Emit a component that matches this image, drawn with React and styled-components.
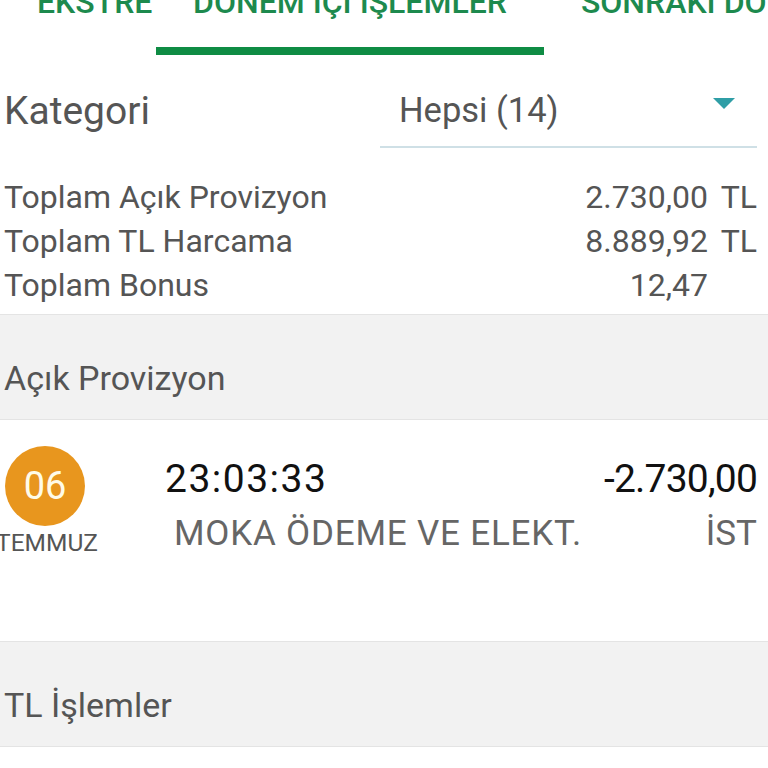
import React from 'react'
import styled, { createGlobalStyle } from 'styled-components'

const GlobalStyle = createGlobalStyle`
  html, body {
    margin: 0;
    padding: 0;
    background: #fff;
    overflow: hidden;
  }
  body {
    font-family: Roboto, "Noto Sans", sans-serif;
  }
`

// sekme şeridi
const Tabs = styled.div`
  display: flex;
  margin-top: -13px;
  white-space: nowrap;
`

const Tab = styled.div`
  flex: 0 0 auto;
  box-sizing: border-box;
  height: 68px;
  padding: 0 37px;
  width: ${p => p.$width ? p.$width + 'px' : 'auto'};
  text-align: ${p => p.$align || 'center'};
  font-size: 32px;
  line-height: 30px;
  font-weight: 500;
  color: #1d8a4e;
  border-bottom: 8px solid ${p => p.$active ? '#0f8c44' : 'transparent'};
`

const Page = styled.div`
  width: 768px;
`

const FilterRow = styled.div`
  display: flex;
  align-items: center;
  height: 112px;
  padding-left: 4px;
`

const Label = styled.div`
  width: 376px;
  font-size: 39px;
  color: #555;
`

const Select = styled.div`
  flex: 0 0 377px;
  display: flex;
  align-items: center;
  justify-content: space-between;
  box-sizing: border-box;
  height: 74px;
  padding: 0 22px 0 19px;
  border-bottom: 2px solid #cfe0e6;
  font-size: 34.5px;
  color: #555;
`

const Caret = styled.span`
  width: 0;
  height: 0;
  border-left: 11px solid transparent;
  border-right: 11px solid transparent;
  border-top: 11px solid #2f9ea6;
  margin-top: -14px;
`

const Summary = styled.div`
  padding: 8px 0 7px 4px;
`

const SumRow = styled.div`
  display: grid;
  grid-template-columns: 1fr 300px 60px;
  align-items: center;
  height: 44px;
  font-size: 32px;
  color: #555;
`

const SumValue = styled.span`
  text-align: right;
`

const SumUnit = styled.span`
  text-align: right;
  padding-right: 11px;
`

const Section = styled.div`
  display: flex;
  align-items: center;
  box-sizing: border-box;
  height: 106px;
  padding: 22px 0 0 4px;
  background: #f2f2f2;
  border-top: 1px solid #e4e4e4;
  border-bottom: 1px solid #e4e4e4;
  font-size: 34px;
  color: #555;
`

const TxRow = styled.div`
  display: flex;
  height: 221px;
  box-sizing: border-box;
  padding-top: 26px;
`

const DateCol = styled.div`
  flex: 0 0 90px;
  min-width: 0;
  display: flex;
  flex-direction: column;
  align-items: center;
`

const Circle = styled.div`
  width: 80px;
  height: 80px;
  border-radius: 50%;
  background: #e8961e;
  color: #fffbe8;
  font-size: 38px;
  display: flex;
  align-items: center;
  justify-content: center;
`

const Month = styled.div`
  margin-top: 3px;
  padding-left: 4px;
  font-size: 24.5px;
  line-height: 28px;
  color: #555;
`

const TxBody = styled.div`
  flex: 1;
  padding: 5px 11px 0 75px;
`

const TxLine = styled.div`
  display: flex;
  justify-content: space-between;
  align-items: center;
  height: ${p => p.$h}px;
  font-size: ${p => p.$size}px;
  color: ${p => p.$color};
  padding-left: ${p => p.$indent || 0}px;
`

const Time = styled.span`
  letter-spacing: 1.5px;
`

const Amount = styled.span`
  letter-spacing: -0.8px;
`

const Merchant = styled.span`
  letter-spacing: 0.8px;
`

export default function App() {
  return (
    <Page>
      <GlobalStyle />
      <Tabs>
        <Tab $width={156} $align="right">EKSTRE</Tab>
        <Tab $active>DÖNEM İÇİ İŞLEMLER</Tab>
        <Tab>SONRAKİ DÖNEM</Tab>
      </Tabs>

      <FilterRow>
        <Label>Kategori</Label>
        <Select>
          <span>Hepsi (14)</span>
          <Caret />
        </Select>
      </FilterRow>

      <Summary>
        <SumRow>
          <span>Toplam Açık Provizyon</span>
          <SumValue>2.730,00</SumValue>
          <SumUnit>TL</SumUnit>
        </SumRow>
        <SumRow>
          <span>Toplam TL Harcama</span>
          <SumValue>8.889,92</SumValue>
          <SumUnit>TL</SumUnit>
        </SumRow>
        <SumRow>
          <span>Toplam Bonus</span>
          <SumValue>12,47</SumValue>
          <SumUnit></SumUnit>
        </SumRow>
      </Summary>

      <Section>Açık Provizyon</Section>

      <TxRow>
        <DateCol>
          <Circle>06</Circle>
          <Month>TEMMUZ</Month>
        </DateCol>
        <TxBody>
          <TxLine $h={56} $size={39} $color="#111">
            <Time>23:03:33</Time>
            <Amount>-2.730,00</Amount>
          </TxLine>
          <TxLine $h={52} $size={35} $color="#666" $indent={9}>
            <Merchant>MOKA ÖDEME VE ELEKT.</Merchant>
            <span>İST</span>
          </TxLine>
        </TxBody>
      </TxRow>

      <Section>TL İşlemler</Section>
    </Page>
  )
}
